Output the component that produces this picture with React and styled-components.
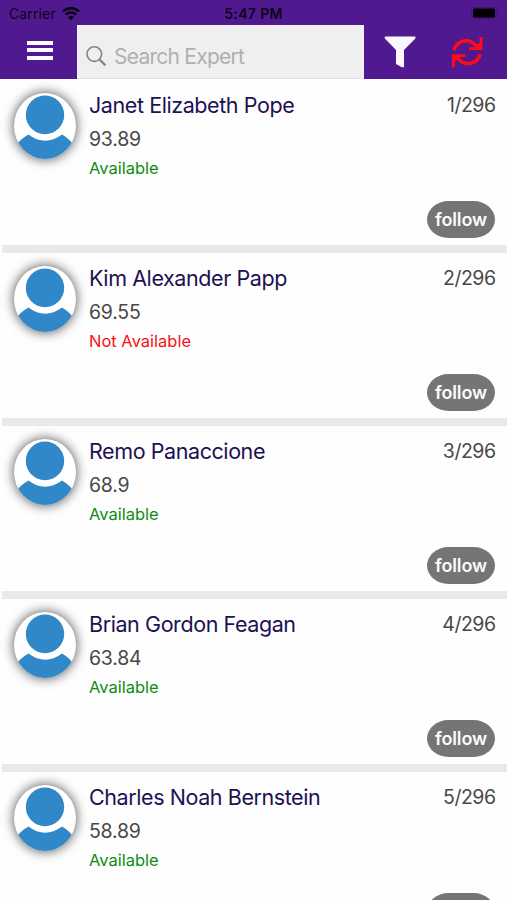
import styled, { createGlobalStyle } from "styled-components";

const GlobalStyle = createGlobalStyle`
  * {
    box-sizing: border-box;
  }
  body {
    margin: 0;
    background-color: #fefefe;
    font-family: Inter, "Liberation Sans", sans-serif;
  }
`;

const Container = styled.div`
  width: 100%;
  height: 900px;
  overflow: hidden;
  background-color: #fefefe;
`;

const Header = styled.header`
  height: 79px;
  background-color: #51198f;
`;

const StatusBar = styled.div`
  height: 25px;
  padding: 3px 9px 0 9px;
  display: grid;
  grid-template-columns: 1fr auto 1fr;
  align-items: center;
  color: #0d0318;
`;

const Carrier = styled.div`
  display: flex;
  align-items: center;
  gap: 6px;
  font-size: 14px;
  line-height: 20px;
  letter-spacing: 0.1px;
`;

const Clock = styled.div`
  font-size: 14px;
  font-weight: 600;
  line-height: 20px;
  letter-spacing: 0.35px;
`;

const Battery = styled.svg`
  justify-self: end;
  margin-top: -2px;
  margin-right: -2px;
`;

const NavBar = styled.div`
  height: 54px;
  display: flex;
`;

const MenuButton = styled.button`
  width: 77px;
  padding: 0 0 4px 2px;
  border: none;
  background-color: transparent;
  display: flex;
  flex-direction: column;
  align-items: center;
  justify-content: center;
  gap: 3.5px;
`;

const MenuLine = styled.span`
  width: 26px;
  height: 4px;
  background-color: #fdfaff;
`;

const SearchBox = styled.label`
  width: 287px;
  padding: 8px 0 0 9px;
  display: flex;
  align-items: center;
  gap: 7px;
  background-color: #efefef;
  border-bottom: 1px solid #e2e2e2;
`;

const SearchInput = styled.input`
  flex: 1;
  min-width: 0;
  padding: 2px 0 0;
  border: none;
  outline: none;
  background-color: transparent;
  font-family: inherit;
  font-size: 21px;
  letter-spacing: -0.75px;
  &::placeholder {
    color: #b0b0b0;
    opacity: 1;
  }
`;

const Actions = styled.div`
  flex: 1;
  display: flex;
  align-items: flex-start;
  padding: 11px 0 0 20px;
  gap: 35px;
`;

const List = styled.ul`
  margin: 0;
  padding: 1px 0 0 2px;
  list-style: none;
`;

const Row = styled.li`
  height: 173px;
  padding: 12px 12px 0 12px;
  display: flex;
  border-bottom: 8px solid #e9e9e9;
`;

const Avatar = styled.div`
  flex: none;
  width: 62px;
  height: 66px;
  margin-top: 1px;
  border-radius: 50%;
  overflow: hidden;
  background-color: #fff;
  box-shadow: 0 0 11px 1px rgba(0, 0, 0, 0.6);
`;

const Info = styled.div`
  flex: 1;
  padding-left: 13px;
`;

const Name = styled.h2`
  margin: 0;
  font-size: 21.5px;
  font-weight: 400;
  line-height: 27px;
  letter-spacing: -0.42px;
  white-space: nowrap;
  color: #1c1152;
`;

const Score = styled.div`
  margin-top: 6px;
  font-size: 19.5px;
  line-height: 28px;
  letter-spacing: -0.25px;
  color: #484848;
`;

const Status = styled.div`
  margin-top: 3px;
  font-size: 16.5px;
  line-height: 24px;
  color: ${(props) => (props.$available ? "#0d8c12" : "#fa1015")};
`;

const Side = styled.div`
  display: flex;
  flex-direction: column;
  align-items: flex-end;
`;

const Count = styled.div`
  font-size: 19.5px;
  line-height: 26px;
  letter-spacing: -0.5px;
  margin-right: -0.5px;
  color: #484848;
`;

const FollowButton = styled.button`
  width: 68px;
  height: 37px;
  margin-top: 83px;
  padding: 0;
  border: none;
  border-radius: 22px / 19px;
  background-color: #757575;
  color: #fbfbfb;
  font-family: inherit;
  font-size: 18px;
  font-weight: 600;
  letter-spacing: -0.1px;
`;

const experts = [
  { name: "Janet Elizabeth Pope", score: "93.89", available: true },
  { name: "Kim Alexander Papp", score: "69.55", available: false },
  { name: "Remo Panaccione", score: "68.9", available: true },
  { name: "Brian Gordon Feagan", score: "63.84", available: true },
  { name: "Charles Noah Bernstein", score: "58.89", available: true },
];

function WifiIcon() {
  return (
    <svg width="18" height="14" viewBox="0 0 18 14" fill="none" stroke="#08020f">
      <path d="M1 4.4a11.5 11.5 0 0 1 16 0" strokeWidth="2.6" />
      <path d="M3.8 7.7a7.4 7.4 0 0 1 10.4 0" strokeWidth="2.5" />
      <path d="M6.2 10.2a4 4 0 0 1 5.6 0L9 13.3z" fill="#08020f" stroke="none" />
    </svg>
  );
}

function SearchIcon() {
  return (
    <svg width="21" height="22" viewBox="0 0 21 22" fill="none" stroke="#858585">
      <circle cx="8.3" cy="9.1" r="7.3" strokeWidth="1.6" />
      <path d="M13.5 14.5l6 5.8" strokeWidth="2.3" />
    </svg>
  );
}

function FunnelIcon() {
  return (
    <svg width="32" height="32" viewBox="0 0 32 32" fill="#faf6fd">
      <path d="M.8.6h30.6v2L20 14v17.3h-2.2L12 28V14L.8 2.6z" />
    </svg>
  );
}

function RefreshIcon() {
  return (
    <svg width="32" height="32" viewBox="0 0 96 96" fill="none" stroke="#ff0a16">
      <path d="M9 43C18 12 54 4 76 30" strokeWidth="10.5" />
      <path d="M90 3V38H54" strokeWidth="8.5" />
      <path d="M70 34L90 17V38H66z" fill="#ff0a16" stroke="none" />
      <path d="M88 54C79 85 43 93 21 67" strokeWidth="10.5" />
      <path d="M7 94V59H43" strokeWidth="8.5" />
      <path d="M27 63L7 80V59H31z" fill="#ff0a16" stroke="none" />
    </svg>
  );
}

function PersonIcon() {
  return (
    <svg width="62" height="66" viewBox="0 0 62 66" fill="#3188c8">
      <ellipse cx="31" cy="21.9" rx="19.2" ry="19.4" />
      <path d="M0 55Q6 46 14.5 41.5Q31 54 48 41.5Q56 46 62 55V66H0z" />
    </svg>
  );
}

function App() {
  return (
    <Container>
      <GlobalStyle />
      <Header>
        <StatusBar>
          <Carrier>
            Carrier
            <WifiIcon />
          </Carrier>
          <Clock>5:47 PM</Clock>
          <Battery width="29" height="12" viewBox="0 0 29 12">
            <rect x=".5" y=".5" width="25" height="11" rx="3" fill="none" stroke="#421376" />
            <rect x="2" y="1.5" width="22" height="9" rx="1.5" fill="#000" />
            <path d="M27 4q2 2 0 4z" fill="#35105f" />
          </Battery>
        </StatusBar>
        <NavBar>
          <MenuButton aria-label="Menu">
            <MenuLine />
            <MenuLine />
            <MenuLine />
          </MenuButton>
          <SearchBox>
            <SearchIcon />
            <SearchInput placeholder="Search Expert" />
          </SearchBox>
          <Actions>
            <FunnelIcon />
            <RefreshIcon />
          </Actions>
        </NavBar>
      </Header>
      <List>
        {experts.map((item, index) => (
          <Row key={item.name}>
            <Avatar>
              <PersonIcon />
            </Avatar>
            <Info>
              <Name>{item.name}</Name>
              <Score>{item.score}</Score>
              <Status $available={item.available}>
                {item.available ? "Available" : "Not Available"}
              </Status>
            </Info>
            <Side>
              <Count>{index + 1}/296</Count>
              <FollowButton>follow</FollowButton>
            </Side>
          </Row>
        ))}
      </List>
    </Container>
  );
}

export default App;
